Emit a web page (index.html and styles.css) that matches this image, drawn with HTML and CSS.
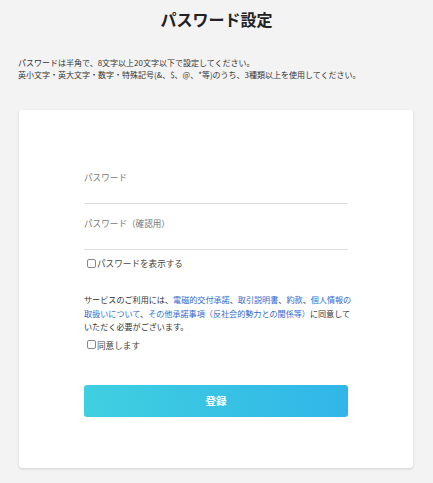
FILE: index.html
```html
<!DOCTYPE html>
<html lang="ja">
<head>
<meta charset="utf-8">
<title>パスワード設定</title>
<link rel="stylesheet" href="styles.css">
</head>
<body>
<main class="page">
  <h1 class="title">パスワード設定</h1>
  <p class="intro">パスワードは半角で、8文字以上20文字以下で設定してください。<br>英小文字・英大文字・数字・特殊記号(&amp;、$、@、*等)のうち、3種類以上を使用してください。</p>
  <section class="card">
    <div class="form">
      <label class="field">
        <span class="field-label">パスワード</span>
        <span class="field-input"></span>
      </label>
      <label class="field field-second">
        <span class="field-label">パスワード（確認用）</span>
        <span class="field-input"></span>
      </label>
      <label class="check check-show"><span class="box"></span>パスワードを表示する</label>
      <p class="terms">サービスのご利用には、<a href="#">電磁的交付承諾</a>、<a href="#">取引説明書</a>、<a href="#">約款</a>、<a href="#">個人情報の<br>取扱いについて</a>、<a href="#">その他承諾事項（反社会的勢力との関係等）</a>に同意して<br>いただく必要がございます。</p>
      <label class="check check-agree"><span class="box"></span>同意します</label>
      <button class="submit" type="button">登録</button>
    </div>
  </section>
</main>
</body>
</html>
```
FILE: styles.css
```css
* { box-sizing: border-box; }
html, body { margin: 0; padding: 0; }
body {
  background: #f3f3f3;
  font-family: "Noto Sans CJK JP", "Noto Sans", sans-serif;
  color: #333;
  width: 433px;
  height: 483px;
  overflow: hidden;
}
.page { padding: 9px 0 0 0; }
.title {
  margin: 0;
  font-size: 16px;
  line-height: 20px;
  font-weight: 700;
  text-align: center;
  color: #222;
}
.intro {
  margin: 28px 0 0 18px;
  font-size: 8px;
  line-height: 12px;
  color: #333;
  white-space: nowrap;
}
.card {
  margin: 29px 0 0 19px;
  width: 394px;
  height: 358px;
  background: #fff;
  border-radius: 3px;
  box-shadow: 0 1px 3px rgba(0,0,0,0.14);
  padding: 60px 65px 0 65px;
}
.form { width: 264px; display: flex; flex-direction: column; }
.field { display: flex; flex-direction: column; border-bottom: 1px solid #ddd; }
.field-label { font-size: 8.6px; line-height: 14px; color: #777; }
.field-input { height: 19px; }
.field-second { margin-top: 12px; }
.check {
  display: flex;
  align-items: center;
  font-size: 8.6px;
  line-height: 12px;
  color: #444;
}
.check-show { margin-top: 7px; }
.box {
  width: 9px; height: 9px;
  border: 1px solid #888;
  border-radius: 2px;
  margin: 0 1px 0 3px;
  background: #fff;
}
.terms {
  margin: 24px 0 0 0;
  font-size: 8.1px;
  line-height: 13.5px;
  color: #333;
  white-space: nowrap;
}
.terms a { color: #2f6bd0; text-decoration: none; }
.check-agree { margin-top: 5px; }
.submit {
  margin-top: 34px;
  height: 32px;
  width: 264px;
  border: none;
  border-radius: 3px;
  background: linear-gradient(80deg, #3fd0e0, #31b5e8);
  color: #fff;
  font-family: inherit;
  font-size: 10.5px;
  font-weight: 700;
  padding: 0;
}
```
